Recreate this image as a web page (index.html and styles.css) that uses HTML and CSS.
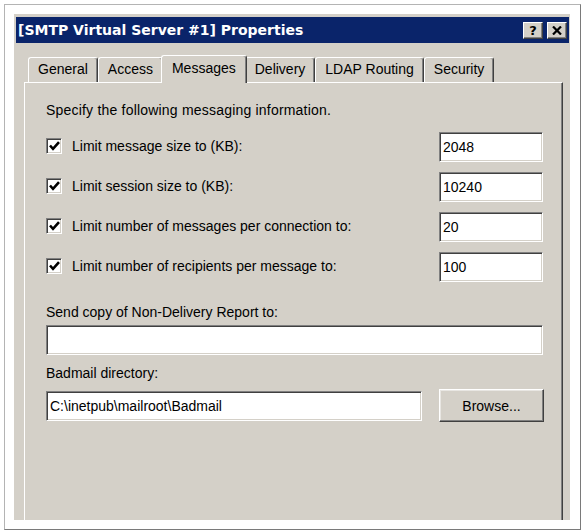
FILE: index.html
```html
<!DOCTYPE html>
<html lang="en">
<head>
<meta charset="UTF-8">
<meta name="viewport" content="width=device-width, initial-scale=1.0">
<title>[SMTP Virtual Server #1] Properties</title>
<link rel="stylesheet" href="styles.css">
</head>
<body>

<div class="frame">
<div class="dialog">
<div class="titlebar">
<span class="title">[SMTP Virtual Server #1] Properties</span>
<div class="title-buttons">
<span class="title-btn help">?</span>
<span class="title-btn close">
<svg width="10" height="9" viewBox="0 0 10 9"><path d="M1 0.5 L9 8.5 M9 0.5 L1 8.5" stroke="#000" stroke-width="2.2" fill="none"/></svg>
</span>
</div>
</div>

<div class="tabs">
<div class="tab">General</div>
<div class="tab">Access</div>
<div class="tab active">Messages</div>
<div class="tab">Delivery</div>
<div class="tab">LDAP Routing</div>
<div class="tab">Security</div>
</div>

<div class="panel">
<p class="intro">Specify the following messaging information.</p>

<div class="limits">
<div class="limit-row">
<label class="check"><span class="box"><svg width="11" height="10" viewBox="0 0 11 10"><path d="M1 4.5 L4 7.8 L10 1.2" stroke="#000" stroke-width="2.6" fill="none"/></svg></span>Limit message size to (KB):</label>
<input class="field small" type="text" value="2048">
</div>
<div class="limit-row">
<label class="check"><span class="box"><svg width="11" height="10" viewBox="0 0 11 10"><path d="M1 4.5 L4 7.8 L10 1.2" stroke="#000" stroke-width="2.6" fill="none"/></svg></span>Limit session size to (KB):</label>
<input class="field small" type="text" value="10240">
</div>
<div class="limit-row">
<label class="check"><span class="box"><svg width="11" height="10" viewBox="0 0 11 10"><path d="M1 4.5 L4 7.8 L10 1.2" stroke="#000" stroke-width="2.6" fill="none"/></svg></span>Limit number of messages per connection to:</label>
<input class="field small" type="text" value="20">
</div>
<div class="limit-row">
<label class="check"><span class="box"><svg width="11" height="10" viewBox="0 0 11 10"><path d="M1 4.5 L4 7.8 L10 1.2" stroke="#000" stroke-width="2.6" fill="none"/></svg></span>Limit number of recipients per message to:</label>
<input class="field small" type="text" value="100">
</div>
</div>

<label class="caption report">Send copy of Non-Delivery Report to:</label>
<input class="field wide" type="text" value="">

<label class="caption badmail">Badmail directory:</label>
<div class="dir-row">
<input class="field dir" type="text" value="C:\inetpub\mailroot\Badmail">
<button class="btn">Browse...</button>
</div>
</div>
</div>
</div>

</body>
</html>
```

FILE: styles.css
```css
body {
    font-family: "Liberation Sans", Arial, sans-serif;
    font-size: 14px;
    background-color: #fff;
    margin: 0;
    padding: 0;
}

.frame {
    box-sizing: border-box;
    width: 577px;
    height: 526px;
    margin: 4px 0 0 4px;
    padding: 9px 10px 9px 9px;
    background-color: #fff;
    border: 1px solid #b4b4b4;
    border-right-color: #7a7a7a;
    border-bottom-color: #7a7a7a;
}

.dialog {
    box-sizing: border-box;
    height: 506px;
    padding: 3px 1px 0 2px;
    background-color: #d4d0c8;
    display: flex;
    flex-direction: column;
}

.titlebar {
    height: 26px;
    background-color: #0a246a;
    display: flex;
    align-items: center;
    justify-content: space-between;
    padding: 0 2px;
}

.title {
    font-family: "DejaVu Sans", Verdana, sans-serif;
    font-weight: bold;
    font-size: 14px;
    color: #fff;
}

.title-buttons {
    display: flex;
    gap: 4px;
}

.title-btn {
    box-sizing: border-box;
    width: 20px;
    height: 17px;
    background-color: #d4d0c8;
    border: 1px solid;
    border-color: #fff #404040 #404040 #fff;
    box-shadow: inset -1px -1px #808080;
    display: flex;
    align-items: center;
    justify-content: center;
    font-family: "DejaVu Sans", Verdana, sans-serif;
    font-weight: bold;
    font-size: 13px;
    line-height: 1;
}

.tabs {
    display: flex;
    align-items: flex-end;
    margin-top: 12px;
    padding-left: 12px;
}

.tab {
    box-sizing: border-box;
    height: 25px;
    line-height: 23px;
    padding: 0 9px;
    border-top: 1px solid #fff;
    border-left: 1px solid #fff;
    border-right: 1px solid #404040;
    box-shadow: inset -1px 0 #808080;
    border-radius: 3px 3px 0 0;
    color: #000;
}

.tab.active {
    position: relative;
    z-index: 1;
    height: 28px;
    line-height: 24px;
    margin: 0 -2px -1px -2px;
    padding: 0 10px;
    background-color: #d4d0c8;
}

.panel {
    flex: 1;
    margin: 0 6px 0 8px;
    padding: 19px 19px 0 21px;
    border-top: 1px solid #fff;
    border-left: 1px solid #fff;
    border-right: 1px solid #404040;
    box-shadow: inset -1px 0 #808080;
}

.intro {
    margin: 0 0 13px 0;
    line-height: 17px;
    letter-spacing: 0.2px;
}

.limits {
    display: flex;
    flex-direction: column;
    gap: 10px;
}

.limit-row {
    display: flex;
    align-items: center;
    justify-content: space-between;
    height: 30px;
}

.check {
    display: flex;
    align-items: center;
    margin-top: -3px;
}

.box {
    box-sizing: border-box;
    width: 16px;
    height: 16px;
    margin-right: 10px;
    background-color: #fff;
    border: 1px solid;
    border-color: #808080 #fff #fff #808080;
    box-shadow: inset 1px 1px #404040, inset -1px -1px #d4d0c8;
    display: flex;
    align-items: center;
    justify-content: center;
}

.field {
    box-sizing: border-box;
    height: 30px;
    padding: 0 3px;
    margin: 0;
    font-family: "Liberation Sans", Arial, sans-serif;
    font-size: 14px;
    color: #000;
    background-color: #fff;
    border: 1px solid;
    border-color: #808080 #fff #fff #808080;
    box-shadow: inset 1px 1px #404040, inset -1px -1px #d4d0c8;
    outline: none;
}

.field.small {
    width: 104px;
}

.field.wide {
    display: block;
    width: 100%;
}

.field.dir {
    width: 376px;
}

.caption {
    display: block;
    line-height: 17px;
}

.caption.report {
    margin: 22px 0 4px 0;
}

.caption.badmail {
    margin: 10px 0 7px 0;
}

.dir-row {
    display: flex;
    align-items: center;
    justify-content: space-between;
}

.btn {
    box-sizing: border-box;
    width: 105px;
    height: 33px;
    margin-right: -1px;
    font-family: "Liberation Sans", Arial, sans-serif;
    font-size: 14px;
    color: #000;
    background-color: #d4d0c8;
    border: 1px solid;
    border-color: #fff #404040 #404040 #fff;
    box-shadow: inset -1px -1px #808080, inset 1px 1px #e8e6e2;
    padding: 0;
}
```
